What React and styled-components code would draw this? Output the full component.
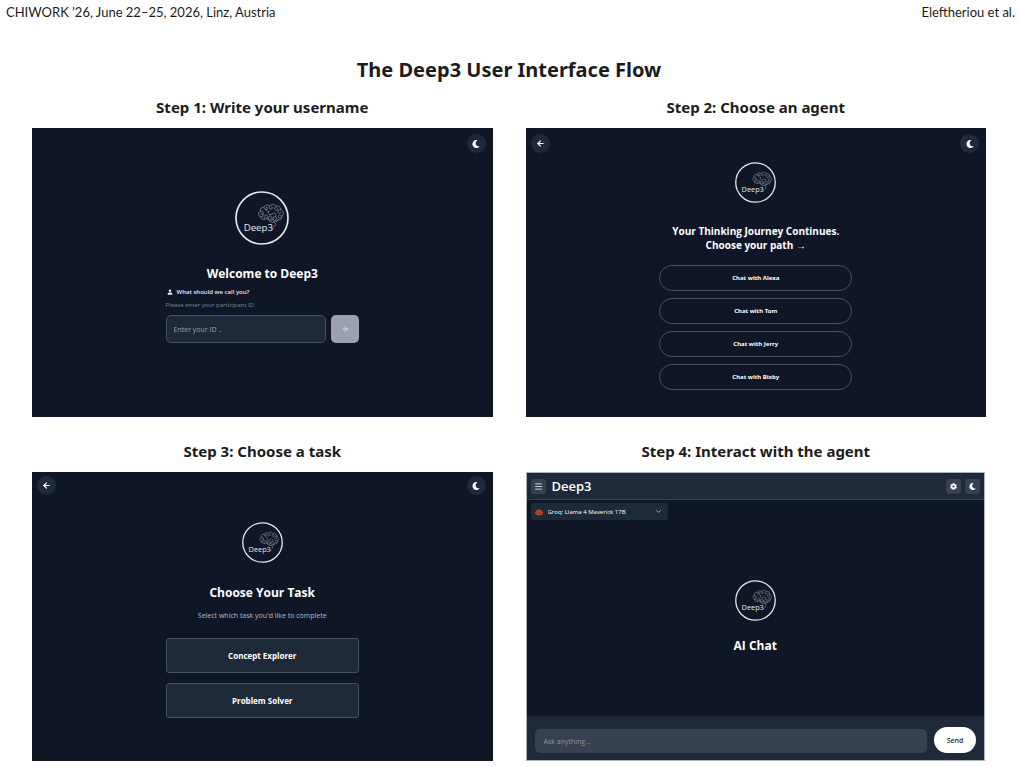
import styled, { createGlobalStyle } from "styled-components";
import { ArrowLeft, ArrowRight, ChevronDown, Menu } from "lucide-react";
import { FaCog, FaMoon, FaRobot } from "react-icons/fa";
import { IoPerson } from "react-icons/io5";

const GlobalStyle = createGlobalStyle`
  * {
    box-sizing: border-box;
    margin: 0;
  }
  body {
    background-color: #fff;
    color: #1c1c1c;
    font-family: "Noto Sans", sans-serif;
  }
  button, input, select {
    font-family: inherit;
    color: inherit;
    border: none;
    padding: 0;
  }
`;

const RunningHead = styled.header`
  display: flex;
  justify-content: space-between;
  padding: 4px 6px;
  font-family: Lato, sans-serif;
  font-size: 13px;
  line-height: 16px;
`;

const Figure = styled.main`
  padding: 32px 35px 0 32px;
`;

const FigureTitle = styled.h1`
  font-size: 20px;
  font-weight: 700;
  line-height: 28px;
  text-align: center;
`;

const Steps = styled.div`
  display: grid;
  grid-template-columns: 1fr 1fr;
  gap: 24px 33px;
  padding-top: 13px;
`;

const Step = styled.section`
  display: flex;
  flex-direction: column;
  gap: 11px;
`;

const StepTitle = styled.h2`
  font-size: 15px;
  font-weight: 700;
  line-height: 20px;
  text-align: center;
`;

const Screen = styled.div`
  display: flex;
  flex-direction: column;
  min-height: 289px;
  background-color: #0f1726;
  color: #fff;
  font-family: "Open Sans", "Noto Sans", sans-serif;
`;

const TopBar = styled.div`
  display: flex;
  justify-content: ${(props) => (props.$end ? "flex-end" : "space-between")};
  padding: ${(props) => (props.$tight ? "4px" : "6px")} 7px 0 5px;
`;

const RoundButton = styled.button`
  display: flex;
  align-items: center;
  justify-content: center;
  width: 19px;
  height: 19px;
  border-radius: 50%;
  background-color: #1e2a39;
`;

const Content = styled.div`
  display: flex;
  flex-direction: column;
  align-items: center;
  padding-top: ${(props) => props.$top}px;
`;

const LogoSvg = styled.svg`
  display: block;
  width: ${(props) => (props.$large ? 54 : 41)}px;
  height: ${(props) => (props.$large ? 54 : 41)}px;
`;

const ScreenTitle = styled.h3`
  margin-top: ${(props) => props.$top}px;
  font-size: ${(props) => props.$size}px;
  font-weight: 700;
  line-height: ${(props) => (props.$size > 10 ? 18 : 14)}px;
  text-align: center;
`;

const LoginForm = styled.form`
  width: 42%;
  padding-top: 4px;
`;

const Label = styled.label`
  display: flex;
  align-items: center;
  gap: 4px;
  padding-left: 1px;
  font-size: 6px;
  font-weight: 600;
  line-height: 10px;
  color: #e5e7eb;
`;

const Hint = styled.p`
  padding-top: 4px;
  font-size: 6px;
  line-height: 8px;
  color: #7d8696;
`;

const FieldRow = styled.div`
  display: flex;
  gap: 5px;
  padding-top: 6px;
`;

const IdInput = styled.input`
  flex: 1;
  min-width: 0;
  height: 28px;
  padding: 0 7px;
  border: 1px solid #445064;
  border-radius: 5px;
  background-color: #1f2a39;
  font-size: 7px;
  &::placeholder {
    color: #9ca3af;
  }
`;

const SubmitButton = styled.button`
  display: flex;
  align-items: center;
  justify-content: center;
  width: 28px;
  height: 28px;
  border-radius: 5px;
  background-color: #9ba1b0;
`;

const AgentList = styled.div`
  display: flex;
  flex-direction: column;
  gap: 7px;
  width: 42%;
  padding-top: 13px;
`;

const AgentButton = styled.button`
  height: 26px;
  border: 1px solid #445064;
  border-radius: 13px;
  background-color: transparent;
  font-family: "Noto Sans", sans-serif;
  font-size: 6px;
  font-weight: 700;
`;

const Subtitle = styled.p`
  padding-top: 9px;
  font-size: 7px;
  line-height: 10px;
  color: #b6bcc6;
`;

const TaskList = styled.div`
  display: flex;
  flex-direction: column;
  gap: 10px;
  width: 42%;
  padding-top: 17px;
`;

const TaskButton = styled.button`
  height: 35px;
  border: 1px solid #445064;
  border-radius: 3px;
  background-color: #1f2a39;
  font-size: 8px;
  font-weight: 700;
`;

const ChatScreen = styled(Screen)`
  margin-right: 1px;
  border: 1px solid #a9b3b8;
`;

const ChatHeader = styled.div`
  display: flex;
  align-items: center;
  gap: 4px;
  height: 27px;
  padding: 0 4px;
  border-bottom: 1px solid #374151;
  background-color: #1f2a39;
`;

const ChatBrand = styled.div`
  flex: 1;
  padding-left: 2px;
  font-size: 13px;
  font-weight: 600;
  line-height: 18px;
`;

const SquareButton = styled.button`
  display: flex;
  align-items: center;
  justify-content: center;
  width: 15px;
  height: 15px;
  border-radius: 3px;
  background-color: #374151;
`;

const ModelPicker = styled.div`
  display: grid;
  grid-template-columns: 17px 1fr 18px;
  align-items: center;
  justify-items: center;
  width: 30%;
  height: 17px;
  margin: 3px 0 0 4px;
  border-radius: 3px;
  background-color: #1f2a39;
  svg {
    grid-row: 1;
    pointer-events: none;
  }
  svg:first-child {
    grid-column: 1;
  }
  svg:last-child {
    grid-column: 3;
  }
`;

const ModelSelect = styled.select`
  grid-row: 1;
  grid-column: 1 / -1;
  width: 100%;
  height: 17px;
  padding-left: 17px;
  appearance: none;
  background-color: transparent;
  font-size: 6px;
  font-weight: 500;
`;

const ChatBody = styled(Content)`
  flex: 1;
`;

const ChatForm = styled.form`
  display: flex;
  align-items: flex-end;
  gap: 7px;
  padding: 10px 8px 7px;
  border-top: 1px solid #1a2433;
  background-color: #1f2a39;
`;

const ChatInput = styled.input`
  flex: 1;
  min-width: 0;
  height: 24px;
  padding: 0 9px;
  border-radius: 5px;
  background-color: #374151;
  font-size: 7px;
  &::placeholder {
    color: #8e96a5;
  }
`;

const SendButton = styled.button`
  width: 42px;
  height: 26px;
  border-radius: 13px;
  background-color: #fff;
  color: #1f2937;
  font-size: 7px;
  font-weight: 600;
`;

function Logo({ large }) {
  return (
    <LogoSvg $large={large} viewBox="0 0 162 162" role="img" aria-label="Deep3">
      <circle cx="81" cy="81" r="78" fill="none" stroke="#e5e7eb" strokeWidth="5" />
      <g fill="none" stroke="#939ba8" strokeWidth="2" strokeLinecap="round">
        <path d="M76 77c-7-4-7-14 0-17-2-8 5-13 11-11 3-8 13-9 17-4 5-7 16-6 19 1 8-3 15 3 14 10 9 4 10 14 4 19 1 8-5 13-12 11-4 5-12 4-15-1-6 5-14 3-15-3-10 5-22 4-23-5Z" />
        <path d="M76 60c5-1 10 2 9 7s-8 4-7-1M87 49c0 6 5 9 9 6s2-8-2-6 0 13 7 13M104 45c-4 5 0 10 5 9s4-8 0-7M123 46c-5 2-6 9-1 11s8-4 4-6M137 56c-6-2-10 3-8 8s9 3 8-1M141 75c-4-5-11-3-11 2s7 6 8 1M76 77c7 2 10-3 8-7M88 82c-3-6 1-11 6-10s5 8 0 8M99 82c1-7 7-9 11-5s0 10-4 7M114 85c-1-6 3-10 8-8s4 8 0 8M101 62c-3 5-1 9 4 9s9-5 13-4 7 5 4 9" />
        <path d="M99 82c1 8 8 13 17 11s13-2 13-7M116 93c8 3 8 9 2 13-5 4-3 8-7 9" />
      </g>
      <text x="26" y="119" fill="#e5e7eb" fontSize="29">
        Deep3
      </text>
    </LogoSvg>
  );
}

function ThemeToggle() {
  return (
    <RoundButton type="button" aria-label="Toggle dark mode">
      <FaMoon size={8} />
    </RoundButton>
  );
}

function BackButton() {
  return (
    <RoundButton type="button" aria-label="Back">
      <ArrowLeft size={9} strokeWidth={3} />
    </RoundButton>
  );
}

function UsernameScreen() {
  return (
    <Screen>
      <TopBar $end>
        <ThemeToggle />
      </TopBar>
      <Content $top={38}>
        <Logo large />
        <ScreenTitle $top={20} $size={12}>
          Welcome to Deep3
        </ScreenTitle>
        <LoginForm>
          <Label htmlFor="participant">
            <IoPerson size={6} />
            What should we call you?
          </Label>
          <Hint>Please enter your participant ID</Hint>
          <FieldRow>
            <IdInput id="participant" type="text" placeholder="Enter your ID .." />
            <SubmitButton type="button" aria-label="Continue">
              <ArrowRight size={8} />
            </SubmitButton>
          </FieldRow>
        </LoginForm>
      </Content>
    </Screen>
  );
}

const agents = ["Alexa", "Tom", "Jerry", "Bixby"];

function AgentScreen() {
  return (
    <Screen>
      <TopBar>
        <BackButton />
        <ThemeToggle />
      </TopBar>
      <Content $top={9}>
        <Logo />
        <ScreenTitle $top={21} $size={10}>
          Your Thinking Journey Continues.
          <br />
          Choose your path →
        </ScreenTitle>
        <AgentList>
          {agents.map((agent) => (
            <AgentButton type="button" key={agent}>
              Chat with {agent}
            </AgentButton>
          ))}
        </AgentList>
      </Content>
    </Screen>
  );
}

function TaskScreen() {
  return (
    <Screen>
      <TopBar $tight>
        <BackButton />
        <ThemeToggle />
      </TopBar>
      <Content $top={27}>
        <Logo />
        <ScreenTitle $top={21} $size={12}>
          Choose Your Task
        </ScreenTitle>
        <Subtitle>Select which task you'd like to complete</Subtitle>
        <TaskList>
          <TaskButton type="button">Concept Explorer</TaskButton>
          <TaskButton type="button">Problem Solver</TaskButton>
        </TaskList>
      </Content>
    </Screen>
  );
}

function ChatWindow() {
  return (
    <ChatScreen>
      <ChatHeader>
        <SquareButton type="button" aria-label="Menu">
          <Menu size={9} />
        </SquareButton>
        <ChatBrand>Deep3</ChatBrand>
        <SquareButton type="button" aria-label="Settings">
          <FaCog size={7} />
        </SquareButton>
        <SquareButton type="button" aria-label="Toggle dark mode">
          <FaMoon size={7} />
        </SquareButton>
      </ChatHeader>
      <ModelPicker>
        <FaRobot size={8} color="#d9481c" />
        <ModelSelect aria-label="Model">
          <option>Groq: Llama 4 Maverick 17B</option>
        </ModelSelect>
        <ChevronDown size={7} />
      </ModelPicker>
      <ChatBody $top={60}>
        <Logo />
        <ScreenTitle $top={16} $size={12}>
          AI Chat
        </ScreenTitle>
      </ChatBody>
      <ChatForm>
        <ChatInput type="text" aria-label="Message" placeholder="Ask anything..." />
        <SendButton type="button">Send</SendButton>
      </ChatForm>
    </ChatScreen>
  );
}

function App() {
  return (
    <>
      <GlobalStyle />
      <RunningHead>
        <span>CHIWORK ’26, June 22–25, 2026, Linz, Austria</span>
        <span>Eleftheriou et al.</span>
      </RunningHead>
      <Figure>
        <FigureTitle>The Deep3 User Interface Flow</FigureTitle>
        <Steps>
          <Step>
            <StepTitle>Step 1: Write your username</StepTitle>
            <UsernameScreen />
          </Step>
          <Step>
            <StepTitle>Step 2: Choose an agent</StepTitle>
            <AgentScreen />
          </Step>
          <Step>
            <StepTitle>Step 3: Choose a task</StepTitle>
            <TaskScreen />
          </Step>
          <Step>
            <StepTitle>Step 4: Interact with the agent</StepTitle>
            <ChatWindow />
          </Step>
        </Steps>
      </Figure>
    </>
  );
}

export default App;
